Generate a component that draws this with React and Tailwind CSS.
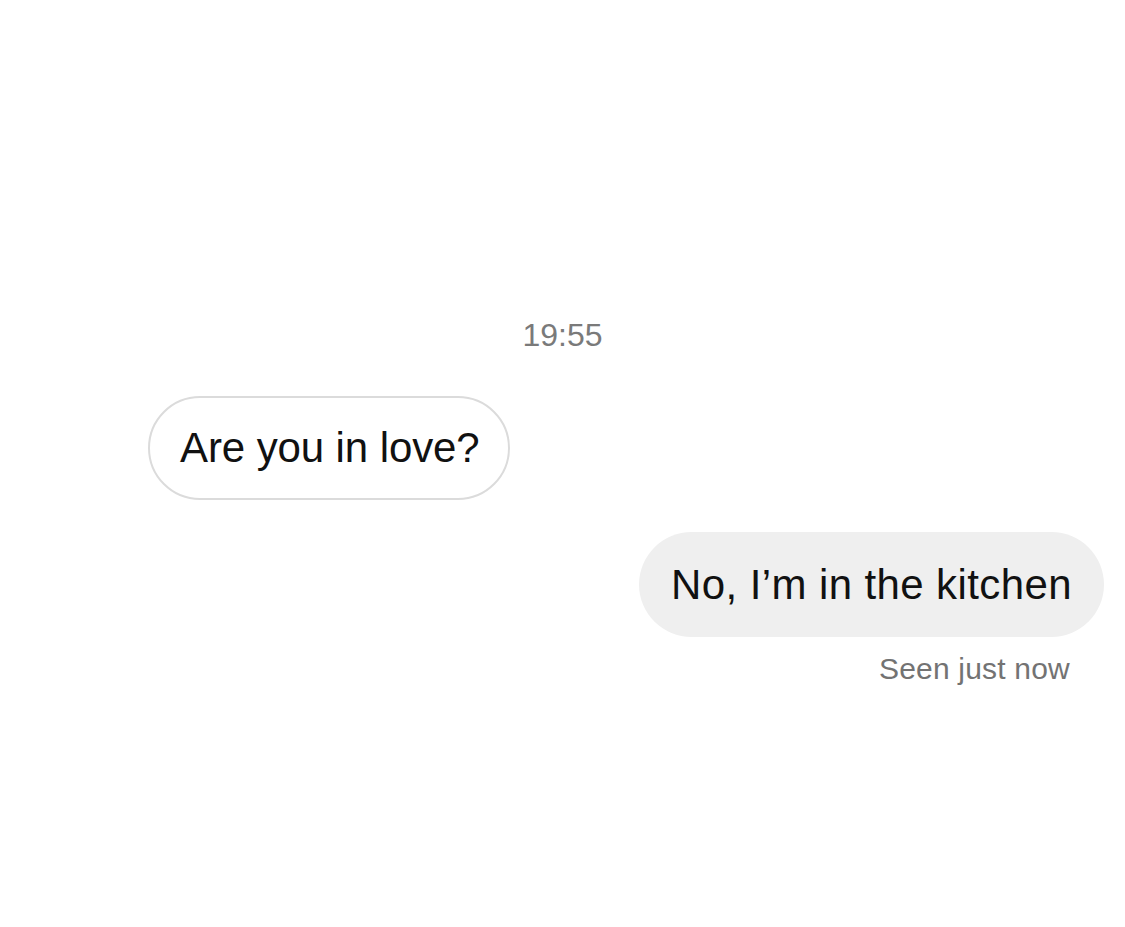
const font = { fontFamily: '"Liberation Sans", Arial, sans-serif' };

const App = () => {
  return (
    <div
      className="flex min-h-[927px] w-full flex-col bg-white pt-[317px]"
      style={font}
    >
      <div className="text-center text-[32px] leading-[37px] text-[#7a7a7a]">
        19:55
      </div>

      <div className="mt-[42px] flex pl-[148px]">
        <div className="flex h-[104px] items-center rounded-full border-2 border-[#dbdbdb] bg-white pl-[30px] pr-[28px] text-[42px] leading-[48px] tracking-[-0.1px] text-[#111111]">
          Are you in love?
        </div>
      </div>

      <div className="mt-[32px] flex justify-end pr-[21px]">
        <div className="flex h-[105px] items-center rounded-full bg-[#efefef] px-[32px] text-[42px] leading-[48px] tracking-[0.4px] text-[#111111]">
          No, I’m in the kitchen
        </div>
      </div>

      <div className="mt-[15px] flex justify-end pr-[55px] text-[30px] leading-[34px] tracking-[0.2px] text-[#737373]">
        Seen just now
      </div>
    </div>
  );
};

export default App;
